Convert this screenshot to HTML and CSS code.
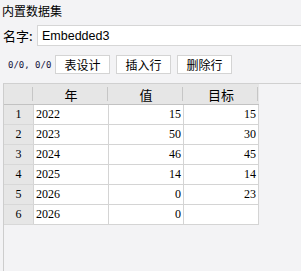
FILE: index.html
```html
<!DOCTYPE html>
<html lang="zh">
<head>
  <meta charset="UTF-8" />
  <meta name="viewport" content="width=device-width, initial-scale=1.0"/>
  <title>内置数据集</title>
  <link rel="stylesheet" href="styles.css">
</head>
<body>

  <div class="title">内置数据集</div>

  <div class="name-row">
    <label for="ds-name">名字:</label>
    <input type="text" id="ds-name" value="Embedded3" />
  </div>

  <div class="toolbar">
    <span class="counter">0/0, 0/0</span>
    <button>表设计</button>
    <button>插入行</button>
    <button>删除行</button>
  </div>

  <div class="grid-panel">
    <table>
      <thead>
        <tr>
          <th class="corner"></th>
          <th>年</th>
          <th>值</th>
          <th>目标</th>
        </tr>
      </thead>
      <tbody id="rows"></tbody>
    </table>
  </div>

  <script>
    const rows = [
      ["2022", "15", "15"],
      ["2023", "50", "30"],
      ["2024", "46", "45"],
      ["2025", "14", "14"],
      ["2026", "0", "23"],
      ["2026", "0", ""]
    ];
    const body = document.getElementById("rows");
    rows.forEach((r, i) => {
      const tr = document.createElement("tr");
      tr.innerHTML = `
        <td class="num">${i + 1}</td>
        <td class="year">${r[0]}</td>
        <td class="val">${r[1]}</td>
        <td class="val">${r[2]}</td>
      `;
      body.appendChild(tr);
    });
  </script>

</body>
</html>
```

FILE: styles.css
```css
body {
  margin: 0;
  background-color: #f3f3f5;
  font-family: "Noto Sans CJK SC", "Liberation Sans", sans-serif;
  font-size: 12px;
  color: #000;
  overflow: hidden;
  height: 271px;
  display: flex;
  flex-direction: column;
}
.title {
  height: 22px;
  line-height: 22px;
  padding-left: 2px;
}
.name-row {
  display: flex;
  margin-top: 3px;
  height: 21px;
}
.name-row label {
  width: 34px;
  padding-left: 3px;
  line-height: 21px;
  font-size: 13px;
}
.name-row input {
  flex: 1;
  margin: 0 -3px 0 0;
  height: 21px;
  box-sizing: border-box;
  border: 1px solid #d6d6d6;
  background: #fff;
  padding: 0 4px;
  font-family: "Liberation Sans", sans-serif;
  font-size: 12.5px;
  outline: none;
}
.toolbar {
  display: flex;
  align-items: center;
  margin-top: 9px;
  height: 19px;
}
.counter {
  width: 47px;
  padding-left: 8px;
  font-family: "DejaVu Sans Mono", monospace;
  font-size: 9px;
  color: #14143c;
}
.toolbar button {
  width: 55px;
  height: 19px;
  margin-right: 6px;
  padding: 0;
  background: #fff;
  border: 1px solid #d4d4d4;
  font-family: "Noto Sans CJK SC", sans-serif;
  font-size: 12px;
  line-height: 17px;
}
.toolbar button:last-child {
  margin-right: 0;
}
.grid-panel {
  flex: 1;
  margin: 9px 0 0 3px;
  border-top: 1px solid #d0d0d0;
  border-left: 1px solid #cdcdcd;
}
table {
  border-collapse: collapse;
  table-layout: fixed;
}
th {
  width: 74px;
  height: 20px;
  padding: 0;
  background: #e6e6e6 linear-gradient(#c6c6c6, #c6c6c6) no-repeat right center / 1px 14px;
  border-right: 1px solid #e6e6e6;
  border-bottom: 1px solid #c2c2c2;
  font-weight: normal;
  font-size: 13px;
}
th.corner {
  width: 29px;
}
td {
  height: 19px;
  padding: 0;
  background: #fff;
  border-right: 1px solid #d4d4d4;
  border-bottom: 1px solid #d4d4d4;
  font-family: "Liberation Serif", serif;
  font-size: 12px;
}
td.num {
  background: #e6e6e6;
  text-align: center;
  border-bottom-color: #d8d8d8;
}
td.year {
  padding-left: 2px;
}
td.val {
  text-align: right;
  padding-right: 2px;
}
```
